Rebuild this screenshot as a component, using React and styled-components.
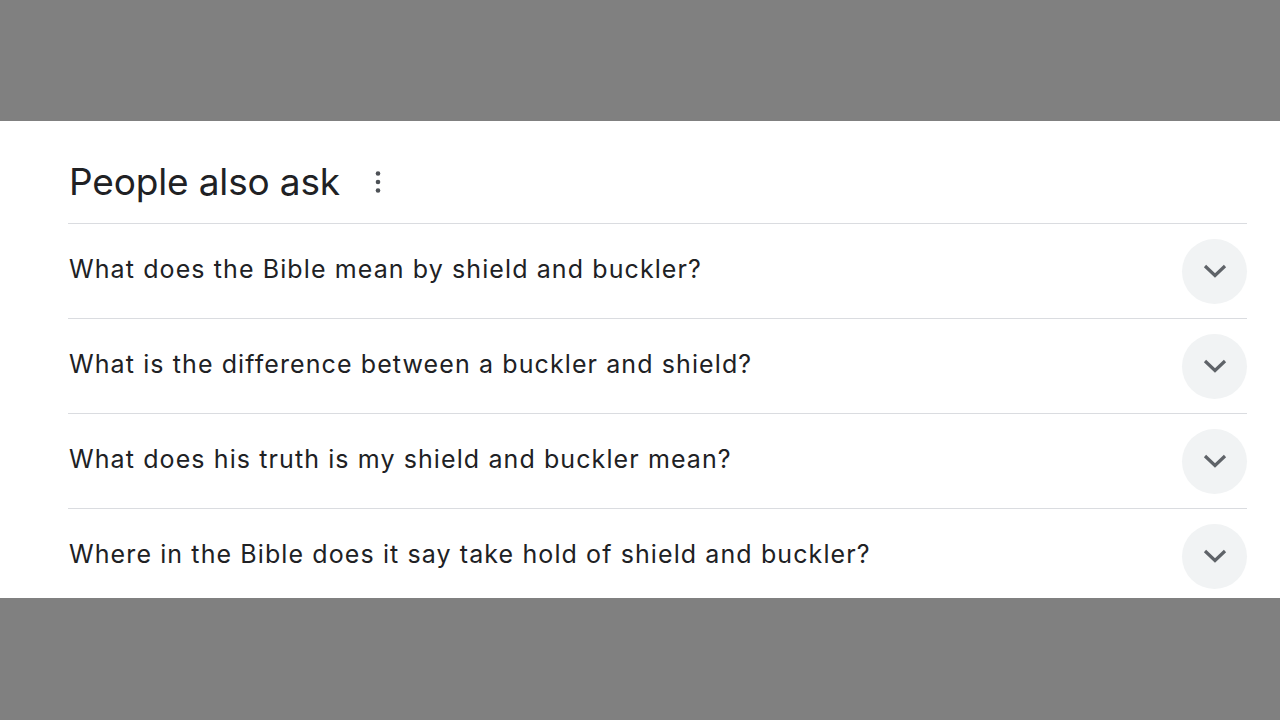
import React from "react";
import styled, { createGlobalStyle } from "styled-components";

const Global = createGlobalStyle`
  html, body { margin: 0; padding: 0; background: #808080; }
  body { width: 1280px; height: 720px; overflow: hidden; font-family: Inter, Arial, sans-serif; }
`;

const Page = styled.div`
  padding-top: 121px;
  height: 720px;
  box-sizing: border-box;
`;

const Panel = styled.section`
  background: #ffffff;
  height: 477px;
  overflow: hidden;
  padding: 0 33px 0 68px;
`;

const Header = styled.div`
  height: 102px;
  box-sizing: border-box;
  padding-top: 37px;
  display: flex;
  align-items: flex-start;
`;

const Title = styled.h2`
  margin: 0 0 0 1px;
  font-family: Inter, Arial, sans-serif;
  font-weight: 400;
  font-size: 37px;
  line-height: 48px;
  color: #202124;
  letter-spacing: -0.15px;
`;

const MenuButton = styled.button`
  border: 0;
  background: none;
  padding: 0;
  margin: 12px 0 0 29px;
  width: 18px;
  height: 24px;
  display: flex;
  align-items: center;
  justify-content: center;
  cursor: pointer;
`;

const Row = styled.div`
  border-top: 1px solid #dadce0;
  height: 94px;
  display: flex;
  align-items: center;
  justify-content: space-between;
`;

const Question = styled.span`
  font-family: Inter, Arial, sans-serif;
  font-size: 25px;
  letter-spacing: 1.1px;
  color: #202124;
  margin-left: 1px;
  margin-top: -4px;
`;

const Toggle = styled.button`
  width: 65px;
  height: 65px;
  border-radius: 50%;
  border: 0;
  background: #f1f3f4;
  display: flex;
  align-items: center;
  justify-content: center;
  padding: 0;
  cursor: pointer;
  flex-shrink: 0;
`;

const questions = [
  "What does the Bible mean by shield and buckler?",
  "What is the difference between a buckler and shield?",
  "What does his truth is my shield and buckler mean?",
  "Where in the Bible does it say take hold of shield and buckler?",
];

const Dots = () => (
  <svg width="8" height="24" viewBox="0 0 8 24">
    <circle cx="4" cy="3.5" r="2.3" fill="#4d5156" />
    <circle cx="4" cy="12" r="2.3" fill="#4d5156" />
    <circle cx="4" cy="20.5" r="2.3" fill="#4d5156" />
  </svg>
);

const Chevron = () => (
  <svg width="26" height="16" viewBox="0 0 26 16">
    <path d="M3 3 L13 12.5 L23 3" fill="none" stroke="#5f6368" strokeWidth="3.2" />
  </svg>
);

export default function App() {
  return (
    <Page>
      <Global />
      <Panel>
        <Header>
          <Title>People also ask</Title>
          <MenuButton aria-label="More options">
            <Dots />
          </MenuButton>
        </Header>
        {questions.map((q) => (
          <Row key={q}>
            <Question>{q}</Question>
            <Toggle aria-label="Expand">
              <Chevron />
            </Toggle>
          </Row>
        ))}
      </Panel>
    </Page>
  );
}
